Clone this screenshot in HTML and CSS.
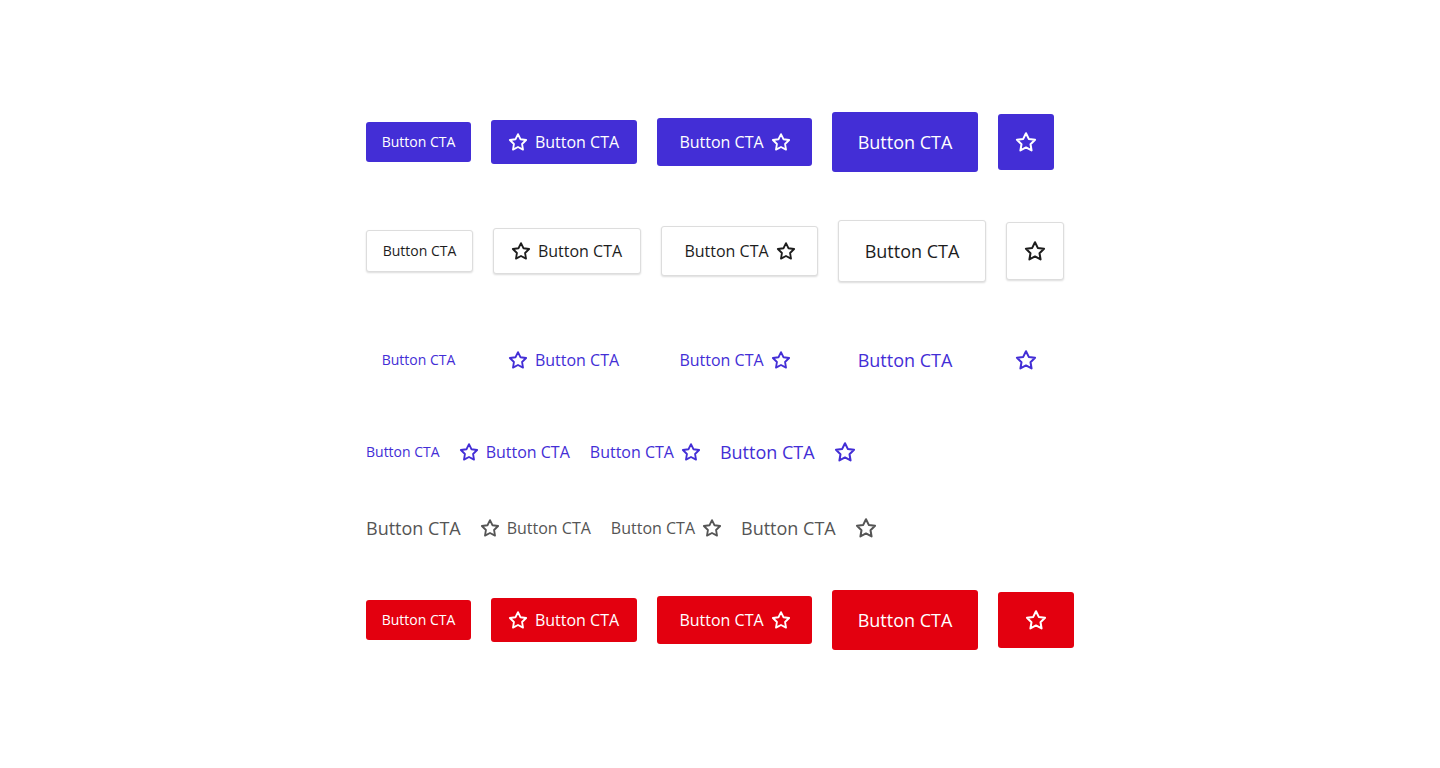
FILE: index.html
```html
<!DOCTYPE html>
<html lang="en">
<head>
<meta charset="utf-8">
<title>Buttons</title>
<link rel="stylesheet" href="styles.css">
</head>
<body>
<svg width="0" height="0" class="defs" aria-hidden="true">
  <defs>
    <symbol id="star" viewBox="1.6 1.8 20.8 20.2" overflow="visible">
      <polygon points="12 2.8 14.9 8.7 21.4 9.6 16.7 14.2 17.8 20.7 12 17.6 6.2 20.7 7.3 14.2 2.6 9.6 9.1 8.7" fill="none" stroke="currentColor" stroke-width="2.1" stroke-linejoin="round"/>
    </symbol>
  </defs>
</svg>
<main class="board">
  <div class="row">
    <button class="btn primary sm">Button CTA</button>
    <button class="btn primary md"><svg class="ic"><use href="#star"/></svg>Button CTA</button>
    <button class="btn primary mdr">Button CTA<svg class="ic"><use href="#star"/></svg></button>
    <button class="btn primary lg">Button CTA</button>
    <button class="btn primary icon"><svg class="ic lgic"><use href="#star"/></svg></button>
  </div>
  <div class="row">
    <button class="btn outline sm">Button CTA</button>
    <button class="btn outline md"><svg class="ic"><use href="#star"/></svg>Button CTA</button>
    <button class="btn outline mdr">Button CTA<svg class="ic"><use href="#star"/></svg></button>
    <button class="btn outline lg">Button CTA</button>
    <button class="btn outline icon"><svg class="ic lgic"><use href="#star"/></svg></button>
  </div>
  <div class="row">
    <button class="btn ghost sm">Button CTA</button>
    <button class="btn ghost md"><svg class="ic"><use href="#star"/></svg>Button CTA</button>
    <button class="btn ghost mdr">Button CTA<svg class="ic"><use href="#star"/></svg></button>
    <button class="btn ghost lg">Button CTA</button>
    <button class="btn ghost icon"><svg class="ic lgic"><use href="#star"/></svg></button>
  </div>
  <div class="row links">
    <button class="link blue s14">Button CTA</button>
    <button class="link blue s16"><svg class="ic"><use href="#star"/></svg>Button CTA</button>
    <button class="link blue s16">Button CTA<svg class="ic"><use href="#star"/></svg></button>
    <button class="link blue s18">Button CTA</button>
    <button class="link blue"><svg class="ic lgic"><use href="#star"/></svg></button>
  </div>
  <div class="row links">
    <button class="link grey s18">Button CTA</button>
    <button class="link grey s16"><svg class="ic"><use href="#star"/></svg>Button CTA</button>
    <button class="link grey s16">Button CTA<svg class="ic"><use href="#star"/></svg></button>
    <button class="link grey s18">Button CTA</button>
    <button class="link grey"><svg class="ic lgic"><use href="#star"/></svg></button>
  </div>
  <div class="row">
    <button class="btn danger sm">Button CTA</button>
    <button class="btn danger md"><svg class="ic"><use href="#star"/></svg>Button CTA</button>
    <button class="btn danger mdr">Button CTA<svg class="ic"><use href="#star"/></svg></button>
    <button class="btn danger lg">Button CTA</button>
    <button class="btn danger icon wide"><svg class="ic lgic"><use href="#star"/></svg></button>
  </div>
</main>
</body>
</html>
```

FILE: styles.css
```css
* { box-sizing: border-box; }
html, body {
  margin: 0;
  padding: 0;
  background: #ffffff;
}
body {
  font-family: "Open Sans", "Noto Sans", Arial, sans-serif;
}
.defs { position: absolute; width: 0; height: 0; }
.board {
  width: fit-content;
  margin: 112px auto 0;
  display: flex;
  flex-direction: column;
  gap: 48px;
}
.row {
  display: flex;
  align-items: center;
  gap: 20px;
  height: 60px;
}
.row:nth-child(2) { height: 62px; }
.row.links { height: 28px; }

.btn {
  display: inline-flex;
  align-items: center;
  justify-content: center;
  gap: 8px;
  border: 0;
  border-radius: 3px;
  font-family: inherit;
  font-weight: 400;
  line-height: 1;
  padding: 0;
  cursor: pointer;
  background: transparent;
}
.ic { width: 18px; height: 18px; flex: none; display: block; overflow: visible; }
.ic.lgic { width: 20px; height: 20px; }

.sm { height: 40px; width: 105px; font-size: 14px; }
.md { height: 44px; width: 146px; font-size: 16px; }
.mdr { height: 48px; width: 155px; font-size: 16px; }
.lg { height: 60px; width: 146px; font-size: 18px; }
.icon { height: 56px; width: 56px; }
.icon.wide { width: 76px; }

.primary { background: #432ed6; color: #ffffff; }
.danger { background: #e3000f; color: #ffffff; }
.ghost { color: #432ed6; }

.outline {
  background: #ffffff;
  color: #1d1d1d;
  border: 1px solid #dddddd;
  box-shadow: 0 1px 2px rgba(0, 0, 0, 0.14);
}
.outline.sm { height: 42px; width: 107px; }
.outline.md { height: 46px; width: 148px; }
.outline.mdr { height: 50px; width: 157px; }
.outline.lg { height: 62px; width: 148px; }
.outline.icon { height: 58px; width: 58px; }

.link {
  display: inline-flex;
  align-items: center;
  gap: 8px;
  border: 0;
  background: transparent;
  padding: 0;
  font-family: inherit;
  line-height: 1;
  cursor: pointer;
}
.blue { color: #432ed6; }
.grey { color: #555555; }
.s14 { font-size: 14px; }
.s16 { font-size: 16px; }
.s18 { font-size: 18px; }
```
